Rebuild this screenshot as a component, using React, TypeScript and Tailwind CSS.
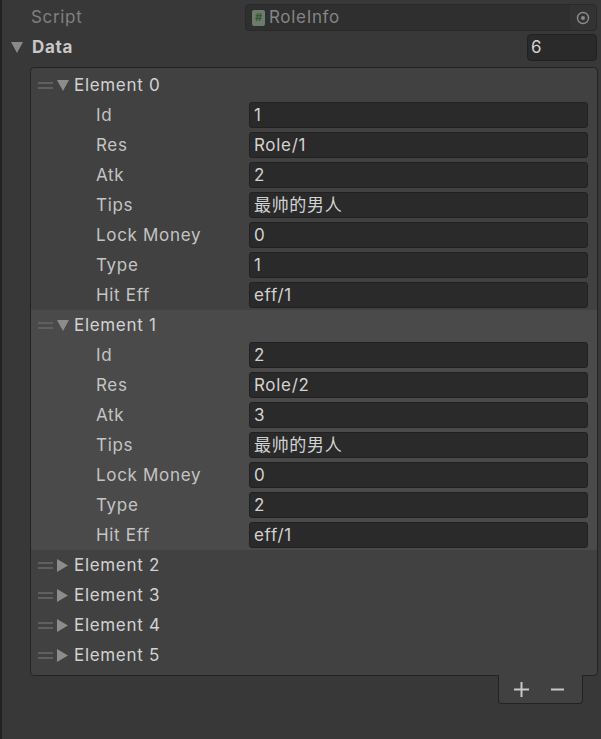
import React from "react";

const TriDown = ({ color = "#8c8c8c" }: { color?: string }) => (
  <svg width="12" height="11" viewBox="0 0 12 11">
    <polygon points="0,0 12,0 6,11" fill={color} />
  </svg>
);
const TriRight = ({ color = "#8c8c8c" }: { color?: string }) => (
  <svg width="11" height="13" viewBox="0 0 11 13">
    <polygon points="0,0 11,6.5 0,13" fill={color} />
  </svg>
);

const Handle = () => (
  <div className="flex flex-col gap-[3px] w-[15px]">
    <div className="h-[2px] bg-[#5f5f5f]" />
    <div className="h-[2px] bg-[#5f5f5f]" />
  </div>
);

type Item = { id: string; res: string; atk: string; tips: string; lock: string; type: string; hit: string };

const items: Item[] = [
  { id: "1", res: "Role/1", atk: "2", tips: "最帅的男人", lock: "0", type: "1", hit: "eff/1" },
  { id: "2", res: "Role/2", atk: "3", tips: "最帅的男人", lock: "0", type: "2", hit: "eff/1" },
];

const FieldRow = ({ label, value }: { label: string; value: string }) => (
  <div className="flex h-[30px] items-center">
    <div className="w-[218px] pl-[65px] pt-[2px] text-[#c4c4c4]">{label}</div>
    <div className="w-[339px] h-[26px] bg-[#2a2a2a] border border-[#212121] rounded-[3px] pl-[4px] pt-[2px] flex items-center text-[#d2d2d2]">
      {value}
    </div>
  </div>
);

const ElementHeader = ({ idx, open }: { idx: number; open: boolean }) => (
  <div className="flex h-[30px] items-center">
    <div className="ml-[7px] mt-[1px]">
      <Handle />
    </div>
    <div className="ml-[4px] w-[17px] flex items-center">{open ? <TriDown /> : <TriRight />}</div>
    <div className="pt-[2px] text-[#d2d2d2]">Element {idx}</div>
  </div>
);

export default function App() {
  return (
    <div
      className="w-[601px] h-[739px] bg-[#383838] border-l-2 border-[#222222] text-[17px] tracking-[0.04em] overflow-hidden"
      style={{ fontFamily: "Inter, 'Noto Sans CJK SC', sans-serif" }}
    >
      {/* Script row */}
      <div className="flex h-[27px] mt-[4px] items-center">
        <div className="w-[243px] pl-[29px] pt-[1px] text-[#808080]">Script</div>
        <div className="w-[352px] h-[27px] bg-[#2f2f2f] border border-[#292929] rounded-[4px] flex items-center">
          <div className="ml-[6px] w-[13px] h-[16px] bg-[#6e7a6e] rounded-[2px] flex items-center justify-center">
            <span className="text-[11px] leading-none font-bold text-[#2f5a2f] tracking-normal">#</span>
          </div>
          <div className="ml-[4px] pt-[1px] flex-1 text-[#858585]">RoleInfo</div>
          <div className="w-[26px] h-full bg-[#333333] rounded-r-[4px] flex items-center justify-center">
            <svg width="14" height="14" viewBox="0 0 14 14">
              <circle cx="7" cy="7" r="5.5" stroke="#8a8a8a" strokeWidth="1.4" fill="none" />
              <circle cx="7" cy="7" r="2" fill="#8a8a8a" />
            </svg>
          </div>
        </div>
      </div>

      {/* Data row */}
      <div className="flex h-[27px] mt-[3px] items-center">
        <div className="ml-[9px] w-[21px]">
          <TriDown color="#8a8a8a" />
        </div>
        <div className="w-[495px] pt-[1px] font-bold text-[#c8c8c8]">Data</div>
        <div className="w-[70px] h-[27px] bg-[#2a2a2a] border border-[#212121] rounded-[4px] pl-[3px] pt-[1px] flex items-center text-[#d2d2d2]">
          6
        </div>
      </div>

      {/* List box */}
      <div className="mt-[6px] ml-[28px] w-[568px] border border-[#232323] rounded-[4px] bg-[#414141] pt-[2px] pb-[5px]">
        {items.map((it, i) => (
          <div key={i} className={i === 1 ? "bg-[#4a4a4a]" : ""}>
            <ElementHeader idx={i} open />
            <FieldRow label="Id" value={it.id} />
            <FieldRow label="Res" value={it.res} />
            <FieldRow label="Atk" value={it.atk} />
            <FieldRow label="Tips" value={it.tips} />
            <FieldRow label="Lock Money" value={it.lock} />
            <FieldRow label="Type" value={it.type} />
            <FieldRow label="Hit Eff" value={it.hit} />
          </div>
        ))}
        {[2, 3, 4, 5].map((n) => (
          <ElementHeader key={n} idx={n} open={false} />
        ))}
      </div>

      {/* +/- tab */}
      <div className="relative z-10 -mt-[1px] ml-[496px] w-[85px] h-[29px] bg-[#414141] border border-t-0 border-[#232323] rounded-b-[4px] flex items-center">
        <svg className="ml-[15px]" width="15" height="15" viewBox="0 0 15 15">
          <rect x="0" y="6.5" width="15" height="2" fill="#c8c8c8" />
          <rect x="6.5" y="0" width="2" height="15" fill="#c8c8c8" />
        </svg>
        <svg className="ml-[22px]" width="13" height="15" viewBox="0 0 13 15">
          <rect x="0" y="6.5" width="13" height="2" fill="#c8c8c8" />
        </svg>
      </div>
    </div>
  );
}
